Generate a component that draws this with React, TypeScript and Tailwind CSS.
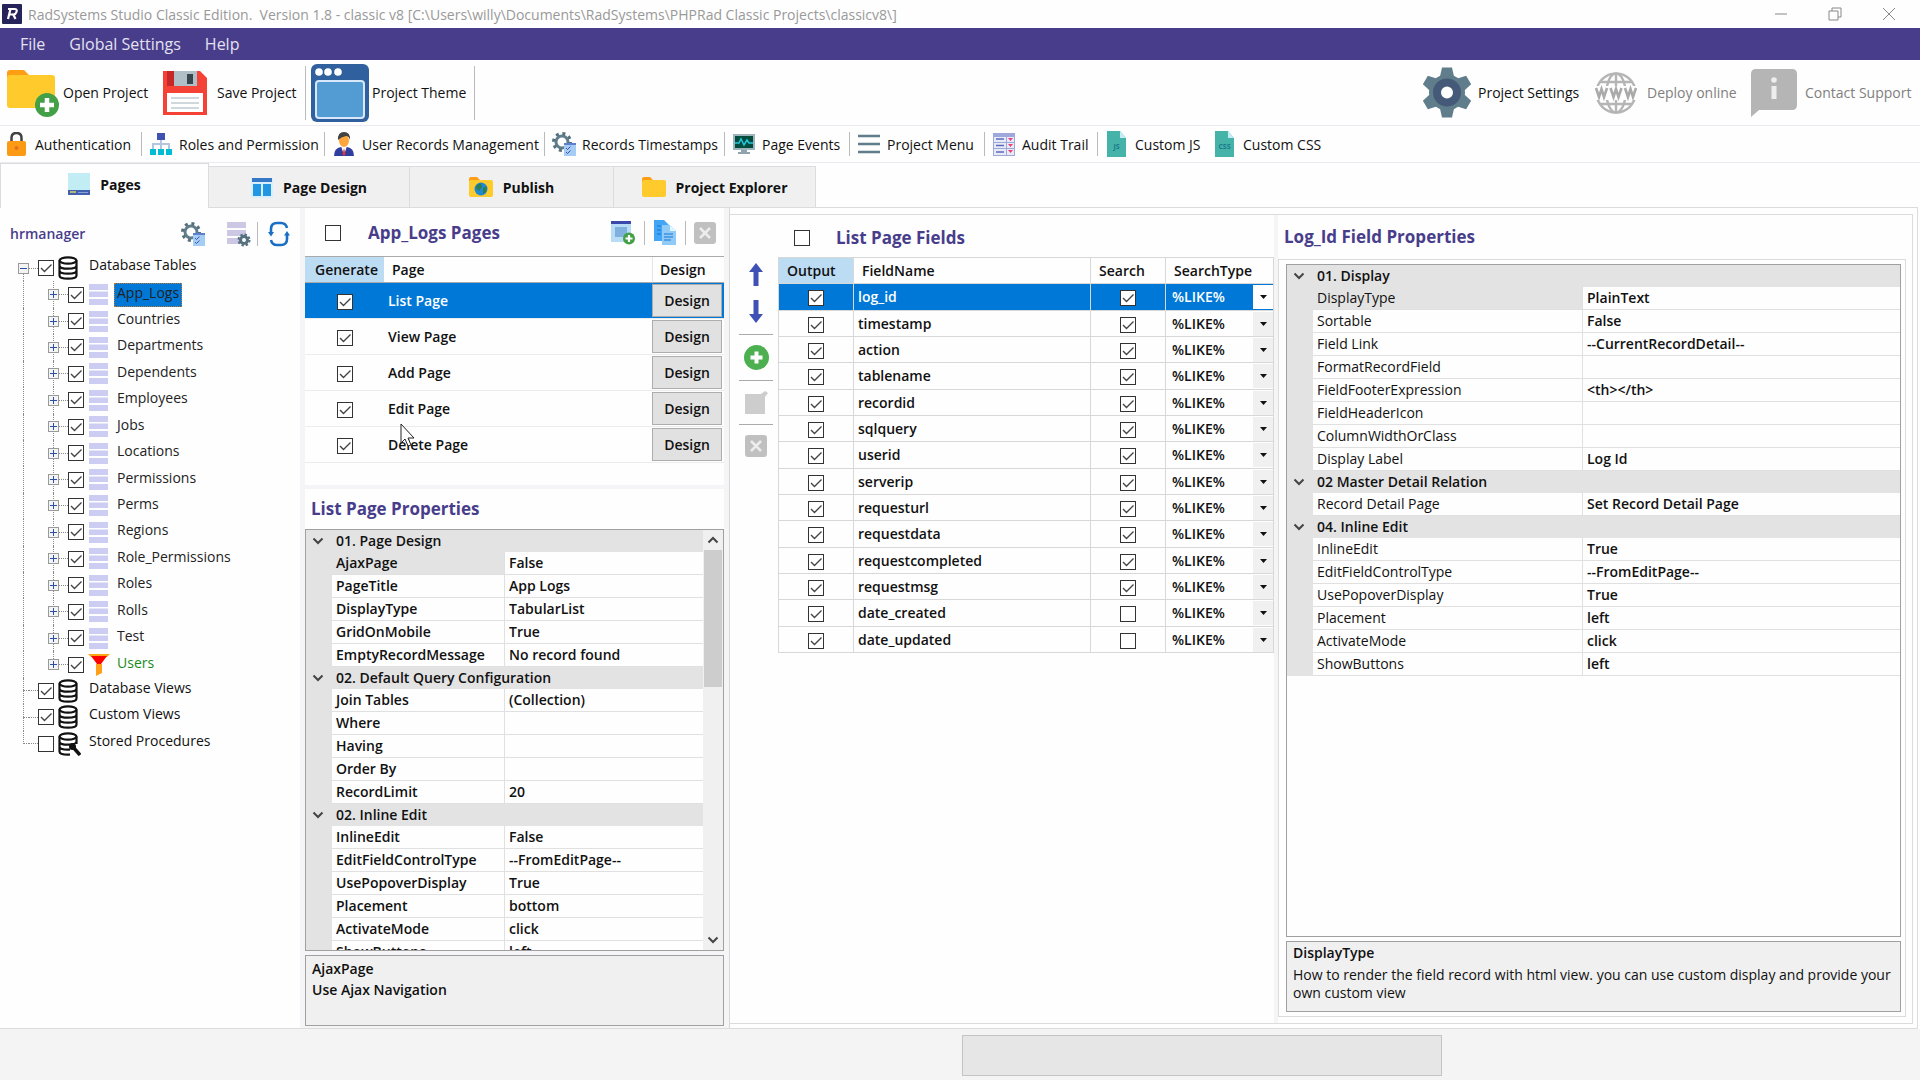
import { ReactNode, useState } from 'react'
import clsx from 'clsx'

type Group = { title: string; rows: [string, string][] }

const tables = [
  'App_Logs',
  'Countries',
  'Departments',
  'Dependents',
  'Employees',
  'Jobs',
  'Locations',
  'Permissions',
  'Perms',
  'Regions',
  'Role_Permissions',
  'Roles',
  'Rolls',
  'Test',
  'Users',
]

const pages = ['List Page', 'View Page', 'Add Page', 'Edit Page', 'Delete Page']

const fields = [
  'log_id',
  'timestamp',
  'action',
  'tablename',
  'recordid',
  'sqlquery',
  'userid',
  'serverip',
  'requesturl',
  'requestdata',
  'requestcompleted',
  'requestmsg',
  'date_created',
  'date_updated',
]

const pageProps: Group[] = [
  {
    title: '01. Page Design',
    rows: [
      ['AjaxPage', 'False'],
      ['PageTitle', 'App Logs'],
      ['DisplayType', 'TabularList'],
      ['GridOnMobile', 'True'],
      ['EmptyRecordMessage', 'No record found'],
    ],
  },
  {
    title: '02. Default Query Configuration',
    rows: [
      ['Join Tables', '(Collection)'],
      ['Where', ''],
      ['Having', ''],
      ['Order By', ''],
      ['RecordLimit', '20'],
    ],
  },
  {
    title: '02. Inline Edit',
    rows: [
      ['InlineEdit', 'False'],
      ['EditFieldControlType', '--FromEditPage--'],
      ['UsePopoverDisplay', 'True'],
      ['Placement', 'bottom'],
      ['ActivateMode', 'click'],
      ['ShowButtons', 'left'],
    ],
  },
]

const fieldProps: Group[] = [
  {
    title: '01. Display',
    rows: [
      ['DisplayType', 'PlainText'],
      ['Sortable', 'False'],
      ['Field Link', '--CurrentRecordDetail--'],
      ['FormatRecordField', ''],
      ['FieldFooterExpression', '<th></th>'],
      ['FieldHeaderIcon', ''],
      ['ColumnWidthOrClass', ''],
      ['Display Label', 'Log Id'],
    ],
  },
  {
    title: '02 Master Detail Relation',
    rows: [['Record Detail Page', 'Set Record Detail Page']],
  },
  {
    title: '04. Inline Edit',
    rows: [
      ['InlineEdit', 'True'],
      ['EditFieldControlType', '--FromEditPage--'],
      ['UsePopoverDisplay', 'True'],
      ['Placement', 'left'],
      ['ActivateMode', 'click'],
      ['ShowButtons', 'left'],
    ],
  },
]

const Check = ({ label, on = true }: { label: string; on?: boolean }) => {
  return (
    <span className="relative inline-block size-4 shrink-0 align-middle">
      <input
        type="checkbox"
        aria-label={label}
        defaultChecked={on}
        className="peer block size-4 appearance-none border border-[#333] bg-white"
      />
      <svg
        className="pointer-events-none absolute inset-0 hidden size-4 peer-checked:block"
        viewBox="0 0 16 16"
        fill="none"
        stroke="#444"
        strokeWidth="1.4"
      >
        <path d="M3 8l3.5 3.5L13.5 4.5" />
      </svg>
    </span>
  )
}

const Chevron = ({ up }: { up?: boolean }) => {
  return (
    <svg
      className="h-3 w-3"
      viewBox="0 0 12 12"
      fill="none"
      stroke="#444"
      strokeWidth="2"
      aria-hidden="true"
    >
      <path d={up ? 'M1.5 8.5L6 4l4.5 4.5' : 'M1.5 3.5L6 8l4.5-4.5'} />
    </svg>
  )
}

/* Icons */

const Logo = () => (
  <svg className="h-5 w-5" viewBox="0 0 20 20" aria-hidden="true">
    <rect width="20" height="20" rx="1" fill="#26225a" />
    <path
      d="M6 5h6.5q3 0 2 3-.6 2.2-3.2 2.6L13.5 15M8.5 5L6 15M7.5 10.5H11"
      fill="none"
      stroke="#fff"
      strokeWidth="2.2"
    />
  </svg>
)

const FolderPlus = () => (
  <svg className="h-12 w-14" viewBox="0 0 56 48" aria-hidden="true">
    <path d="M1 4q0-3 3-3h14l5 5H40v10H1z" fill="#ff9d14" />
    <rect x="1" y="6" width="48" height="33" rx="3" fill="#ffca2c" />
    <circle cx="41" cy="36" r="12" fill="#43a047" />
    <path d="M41 29v14M34 36h14" stroke="#fff" strokeWidth="4.5" />
  </svg>
)

const Floppy = () => (
  <svg className="h-11 w-11" viewBox="0 0 44 44" aria-hidden="true">
    <path d="M0 0h37l7 7v37H0z" fill="#f44336" />
    <path d="M4 0h8v15H4z" fill="#c62828" />
    <path d="M11 0h23v15H11z" fill="#b0bec5" />
    <path d="M24 3h6v10h-6z" fill="#37474f" />
    <path d="M4 22h36v19H4z" fill="#fff" />
    <path d="M8 27h28M8 32h28M8 37h28" stroke="#cfd8dc" strokeWidth="2" />
  </svg>
)

const ThemeIcon = () => (
  <svg className="h-[58px] w-[58px]" viewBox="0 0 58 58" aria-hidden="true">
    <rect width="58" height="58" rx="6" fill="#30609d" />
    <rect x="5" y="17" width="48" height="37" rx="3" fill="#539bd3" stroke="#d6e8fa" strokeWidth="2" />
    <g fill="#fff">
      <circle cx="8" cy="8" r="3.8" />
      <circle cx="17" cy="8" r="3.8" />
      <circle cx="27" cy="8" r="3.8" />
    </g>
  </svg>
)

const BigGear = () => (
  <svg className="h-[51px] w-[50px]" viewBox="0 0 50 50" aria-hidden="true">
    <g fill="#607d8b">
      <circle cx="25" cy="25" r="18" />
      {[0, 60, 120, 180, 240, 300].map(a => (
        <path key={a} d="M18 9L20 0h10l2 9z" transform={`rotate(${a} 25 25)`} />
      ))}
    </g>
    <circle cx="25" cy="25" r="10" fill="#fff" stroke="#455a78" strokeWidth="8" />
  </svg>
)

const Globe = () => (
  <svg className="h-[42px] w-[42px]" viewBox="0 0 42 42" aria-hidden="true">
    <g fill="none" stroke="#b5b5b5" strokeWidth="2.4">
      <circle cx="21" cy="21" r="19.5" />
      <ellipse cx="21" cy="21" rx="9.5" ry="19.5" />
      <path d="M21 1v40M5 10h32M5 32h32" />
    </g>
    <path d="M0 14h42v14H0z" fill="#fefefe" />
    <path
      d="M1 16l3 9 2.5-8L9 25l3-9M15.500 16l3 9 2.500-8 2.500 8 3-9M30 16l3 9 2.500-8 2.500 8 3-9"
      fill="none"
      stroke="#aaa"
      strokeWidth="2.6"
    />
  </svg>
)

const Support = () => (
  <svg className="h-12 w-[46px]" viewBox="0 0 46 48" aria-hidden="true">
    <path d="M5 0h36q5 0 5 5v31q0 5-5 5H8l-8 7V5q0-5 5-5z" fill="#b5b5b5" />
    <circle cx="23" cy="11" r="2.8" fill="#eee" />
    <path d="M20.5 17h5v13h-5z" fill="#eee" />
  </svg>
)

const Lock = () => (
  <svg className="h-6 w-6" viewBox="0 0 24 24" aria-hidden="true">
    <path d="M6.5 11V6q0-5 5-5t5 5v5" fill="none" stroke="#424242" strokeWidth="2.5" />
    <rect x="2" y="9" width="19" height="15" rx="2" fill="#fb9a15" />
    <circle cx="11.5" cy="16" r="2" fill="#e5711c" />
  </svg>
)

const OrgChart = () => (
  <svg className="h-6 w-6" viewBox="0 0 24 24" aria-hidden="true">
    <path d="M12 7v10M4 17v-5h16v5" fill="none" stroke="#b5c5de" strokeWidth="2" />
    <path d="M8 1h8v7H8z" fill="#3f51b5" />
    <path d="M1 17h6v6H1zM9 17h6v6H9zM17 17h6v6h-6z" fill="#00bcd4" />
  </svg>
)

const Person = () => (
  <svg className="h-6 w-6" viewBox="0 0 24 24" aria-hidden="true">
    <path d="M2 24q0-8 7-9h6q7 1 7 9z" fill="#303f9f" />
    <path d="M9 14h6l-3 9z" fill="#fff" />
    <path d="M12 16l1.5 6L12 24l-1.5-2z" fill="#e53935" />
    <ellipse cx="12" cy="8.5" rx="5" ry="6.5" fill="#ffa63a" />
    <path d="M6 8q-.5-8 6-8t6 8q-1-4-4-4-5 1-8 4z" fill="#424242" />
  </svg>
)

const GearDoc = () => (
  <svg className="h-6 w-6" viewBox="0 0 24 24" aria-hidden="true">
    <circle cx="10" cy="10" r="6" fill="none" stroke="#607d8b" strokeWidth="3" />
    <circle cx="10" cy="10" r="8.5" fill="none" stroke="#546e7a" strokeWidth="3" strokeDasharray="3 3.7" />
    <path d="M12 12h12v12H12z" fill="#a5cdf3" />
    <path d="M12 11h12v2H12z" fill="#5c7fd0" />
    <path d="M14 16l1.5 1.5 3-3M14 20l1.5 1.5 3-3" fill="none" stroke="#3f51b5" />
  </svg>
)

const Monitor = () => (
  <svg className="h-6 w-6" viewBox="0 0 24 24" aria-hidden="true">
    <path d="M1 2h22v16H1z" fill="#9fb3bd" />
    <path d="M3 4h18v12H3z" fill="#004d40" />
    <path d="M3 11h4l2-4 3 6 3-5 2 3h4" fill="none" stroke="#26c6da" strokeWidth="1.5" />
    <path d="M9 18h6v2h3v2H6v-2h3z" fill="#90a4ae" />
  </svg>
)

const Lines = () => (
  <svg className="h-6 w-6" viewBox="0 0 24 24" aria-hidden="true">
    <path d="M1 4h22M1 12h22M1 20h22" stroke="#607d8b" strokeWidth="2.4" />
  </svg>
)

const Audit = () => (
  <svg className="h-6 w-6" viewBox="0 0 24 24" aria-hidden="true">
    <path d="M1 1h22v23H1z" fill="#9fa8da" />
    <path d="M2 5h12v5H2zM2 11h12v5H2zM2 17h12v6H2zM15 5h7v5h-7zM15 11h7v5h-7zM15 17h7v6h-7z" fill="#e8eaf6" />
    <path d="M4 7h8M4 13.5h8M4 20h8" stroke="#5c6bc0" strokeWidth="1.5" />
    <path d="M16 6l2.5 3L21 6zM16 12l2.5 3 2.5-3zM16 18l2.5 3 2.5-3z" fill="#ec407a" />
  </svg>
)

const FileIcon = ({ text }: { text: string }) => (
  <svg className="h-[26px] w-6" viewBox="0 0 24 26" aria-hidden="true">
    <path d="M2 0h13l6 7v19H2z" fill="#45b3a8" />
    <path d="M15 0l6 7h-6z" fill="#c5ecf5" />
    <text x="11.5" y="18" textAnchor="middle" fontSize="7" fontWeight="700" fill="#1b7a8c" fontFamily="Open Sans">
      {text}
    </text>
  </svg>
)

const PagesIcon = () => (
  <svg className="h-[22px] w-[22px]" viewBox="0 0 22 22" aria-hidden="true">
    <path d="M0 0h22v17H0z" fill="#c3edf5" />
    <path d="M0 17h22v5H0z" fill="#4260ad" />
    <path d="M2 19h6" stroke="#dcd267" strokeWidth="1.5" />
    <path d="M10 19.5h10" stroke="#88a2d8" />
  </svg>
)

const LayoutIcon = () => (
  <svg className="h-[22px] w-[22px]" viewBox="0 0 22 22" aria-hidden="true">
    <path d="M0 2h22v20H0z" fill="#d6effa" />
    <path d="M1 2h20v4H1z" fill="#3578c6" />
    <path d="M2 8h8v12H2zM12 8h8v12h-8z" fill="#2196e3" />
  </svg>
)

const Folder = ({ globe }: { globe?: boolean }) => (
  <svg className="h-[22px] w-6" viewBox="0 0 24 22" aria-hidden="true">
    <path d="M0 3q0-2 2-2h6l3 3h9v4H0z" fill="#ff9d14" />
    <rect y="4" width="24" height="17" rx="2" fill="#ffca2c" />
    {globe && (
      <>
        <circle cx="12" cy="13" r="6.5" fill="#1e88d8" />
        <path d="M8 9l4-2 1 4-3 4-3-3zM14 12l4-2-1 6-3 2z" fill="#2e7d4f" />
      </>
    )}
  </svg>
)

const TableGear = () => (
  <svg className="h-[26px] w-6" viewBox="0 0 24 26" aria-hidden="true">
    <path d="M0 1h19v6H0zM0 9h19v6H0zM0 17h14v6H0z" fill="#ccc8e4" />
    <circle cx="17" cy="19" r="3.5" fill="none" stroke="#55707e" strokeWidth="3" />
    <circle cx="17" cy="19" r="5.5" fill="none" stroke="#55707e" strokeWidth="2" strokeDasharray="2.4 1.9" />
  </svg>
)

const Refresh = () => (
  <svg className="h-[26px] w-[22px]" viewBox="0 0 22 26" fill="none" stroke="#1a6fc4" strokeWidth="2.6" aria-hidden="true">
    <path d="M3 12V8q0-6 6-6h4q5 0 6 5M19 14v4q0 6-6 6H9q-5 0-6-5" />
    <path d="M0 11h6l-3 4.5zM16 14.5h6l-3-4.5z" fill="#1a6fc4" stroke="none" />
  </svg>
)

const Database = ({ wrench }: { wrench?: boolean }) => (
  <svg className="h-6 w-6" viewBox="0 0 24 24" fill="none" stroke="#111" strokeWidth="2.2" aria-hidden="true">
    <ellipse cx="11" cy="4.5" rx="8.5" ry="3.2" />
    <path d="M2.5 4.5v15M19.5 4.5v15M2.5 9.5q0 3.2 8.5 3.2t8.5-3.2M2.5 14.5q0 3.2 8.5 3.2t8.500-3.2M2.5 19.5q0 3.2 8.5 3.2t8.5-3.2" />
    {wrench && (
      <>
        <path d="M13 12h11v12H13z" fill="#fefefe" stroke="none" />
        <circle cx="15.5" cy="14.5" r="2.4" fill="#111" />
        <path d="M16 15l7 8" strokeWidth="3.5" />
      </>
    )}
  </svg>
)

const TableRows = () => (
  <svg className="h-[21px] w-[19px]" viewBox="0 0 19 21" aria-hidden="true">
    <path d="M0 0h19v6H0zM0 7.5h19v5.5H0zM0 15h19v6H0z" fill="#cdcdf4" />
  </svg>
)

const Funnel = () => (
  <svg className="h-[22px] w-[22px]" viewBox="0 0 22 22" aria-hidden="true">
    <path d="M0 0h22l-3 3H3z" fill="#f9a616" />
    <path d="M3 2h16l-6 8H9z" fill="#f00" />
    <path d="M8 10h6v9l-6 3z" fill="#ff9f1a" />
  </svg>
)

const AddWindow = () => (
  <svg className="h-[26px] w-[26px]" viewBox="0 0 26 26" aria-hidden="true">
    <path d="M1 1h20v21H1z" fill="#b9dcf5" />
    <path d="M1 1h20v3H1z" fill="#3949ab" />
    <path d="M5 7h12v10H5z" fill="#7fb0de" />
    <circle cx="19" cy="18.5" r="6" fill="#43a047" />
    <path d="M19 15v7M15.5 18.5h7" stroke="#fff" strokeWidth="2.2" />
  </svg>
)

const CopyPages = () => (
  <svg className="h-[26px] w-[24px]" viewBox="0 0 24 26" aria-hidden="true">
    <path d="M1 0h10l5 5v16H1z" fill="#42a5f5" />
    <path d="M9 5h8l6 6v14H9z" fill="#90caf9" />
    <path d="M4 6h4M4 10h4M4 14h4M11 14h9M11 17h9M11 20h7" stroke="#1976d2" strokeWidth="1.2" />
    <path d="M17 5l6 6h-6z" fill="#e1f5fe" />
  </svg>
)

const CloseBox = () => (
  <svg className="h-[22px] w-[22px]" viewBox="0 0 22 22" aria-hidden="true">
    <rect width="22" height="22" rx="3" fill="#c0c0c0" />
    <path d="M6 6l10 10M16 6L6 16" stroke="#ededed" strokeWidth="2.5" />
  </svg>
)

const Arrow = ({ down }: { down?: boolean }) => (
  <svg className={clsx('h-[23px] w-[14px]', down && 'rotate-180')} viewBox="0 0 14 23" aria-hidden="true">
    <path d="M7 0l7 9H9.500v14h-5V9H0z" fill="#3f51b5" />
  </svg>
)

const PlusCircle = () => (
  <svg className="h-[25px] w-[25px]" viewBox="0 0 25 25" aria-hidden="true">
    <circle cx="12.5" cy="12.5" r="12.5" fill="#4caf50" />
    <path d="M12.5 6.5v12M6.5 12.5h12" stroke="#fff" strokeWidth="4" />
  </svg>
)

const EditBox = () => (
  <svg className="h-[23px] w-[23px]" viewBox="0 0 23 23" aria-hidden="true">
    <path d="M0 3h16l4-3 3 2-3 4v17H0z" fill="#cdcdcd" />
  </svg>
)

/* Chrome */

const Sep = () => <div className="h-6 w-px shrink-0 bg-[#bbb]" />

const ToolItem = ({ icon, label, width }: { icon: ReactNode; label: string; width: string }) => {
  return (
    <button type="button" className={clsx('flex shrink-0 items-center gap-1.5 whitespace-nowrap', width)}>
      {icon}
      {label}
    </button>
  )
}

const Tab = ({ icon, label, active, width }: { icon: ReactNode; label: string; active?: boolean; width: string }) => {
  return (
    <button
      type="button"
      role="tab"
      aria-selected={!!active}
      className={clsx(
        'flex items-center justify-center gap-2.5 border-t border-r border-[#dcdcdc] text-[14px] font-bold whitespace-nowrap',
        width,
        active ? 'h-[45px] border-l bg-[#fefefe] pb-1' : 'h-[42px] border-b bg-[#f0f0f0]',
      )}
    >
      {icon}
      {label}
    </button>
  )
}

const Expander = ({ open }: { open?: boolean }) => {
  return (
    <button
      type="button"
      aria-label={open ? 'Collapse' : 'Expand'}
      className="relative grid size-[11px] place-items-center border border-[#999] bg-[#f4f4f4]"
    >
      <svg className="size-[7px]" viewBox="0 0 7 7" stroke="#2a4fa8" aria-hidden="true">
        <path d={open ? 'M0 3.5h7' : 'M0 3.5h7M3.5 0v7'} />
      </svg>
    </button>
  )
}

const RootNode = ({ label, on = true, open, last }: { label: string; on?: boolean; open?: boolean; last?: boolean }) => {
  return (
    <div className="flex items-center pl-[18px]">
      <div className="relative flex h-full w-[11px] items-center">
        <div
          className={clsx(
            'absolute left-[5px] w-px border-l border-dotted border-[#888]',
            open ? 'top-1/2 bottom-0' : last ? 'top-0 bottom-1/2' : 'inset-y-0',
          )}
        />
        {open ? <Expander open /> : <div className="ml-[5px] h-px w-1.5 border-t border-dotted border-[#888]" />}
      </div>
      <div className="w-[9px] border-t border-dotted border-[#888]" />
      <Check label={label} on={on} />
      <div className="ml-[3px]">
        <Database wrench={last} />
      </div>
      <span className="ml-2 pb-1.5">{label}</span>
    </div>
  )
}

const TableNode = ({ label, selected }: { label: string; selected?: boolean }) => {
  const users = label === 'Users'
  return (
    <div className="flex items-center pl-[23px]">
      <div className="w-[25px] self-stretch border-l border-dotted border-[#888]" />
      <div className="relative flex h-full w-[11px] items-center">
        <div
          className={clsx('absolute top-0 left-[5px] w-px border-l border-dotted border-[#888]', users ? 'bottom-1/2' : 'bottom-0')}
        />
        <Expander />
      </div>
      <div className="w-[9px] border-t border-dotted border-[#888]" />
      <Check label={label} />
      <div className="ml-[3px] flex w-[23px] justify-center">{users ? <Funnel /> : <TableRows />}</div>
      <span
        className={clsx(
          'ml-1 border border-dotted px-0.5 pb-1',
          selected ? 'border-[#c47a2c] bg-[#0078d7]' : 'border-transparent',
          users ? 'text-[#1a8a1a]' : 'text-[#222]',
        )}
      >
        {label}
      </span>
    </div>
  )
}

const PropertyTable = ({ name, groups, bold, wide }: { name: string; groups: Group[]; bold?: boolean; wide?: boolean }) => {
  return (
    <table
      aria-label={name}
      className={clsx('w-full table-fixed border-separate border-spacing-0 text-[14px] leading-5', wide ? 'h-[411px]' : 'h-[434px]')}
    >
      <colgroup>
        <col className="w-[26px]" />
        <col className={wide ? 'w-[270px]' : 'w-[173px]'} />
        <col />
      </colgroup>
      {groups.map((group, g) => (
        <tbody key={group.title}>
          <tr className="bg-[#e3e3e3]">
            <td className="p-0 pl-1.5">
              <Chevron />
            </td>
            <th colSpan={2} className="p-0 pl-1 text-left font-semibold">
              {group.title}
            </th>
          </tr>
          {group.rows.map(([key, value], i) => (
            <tr key={key}>
              <td className="bg-[#e3e3e3] p-0" />
              <th
                className={clsx(
                  'border-r border-b border-[#e0e0e0] p-0 pl-1 text-left',
                  bold ? 'font-semibold' : 'font-normal',
                  g === 0 && i === 0 && 'bg-[#e3e3e3]',
                )}
              >
                {key}
              </th>
              <td className="border-b border-[#e0e0e0] p-0">
                <input
                  type="text"
                  aria-label={key}
                  defaultValue={value}
                  className="block h-5 w-full bg-transparent pl-1 font-semibold outline-none"
                />
              </td>
            </tr>
          ))}
        </tbody>
      ))}
    </table>
  )
}

const Heading = ({ children }: { children: ReactNode }) => (
  <h2 className="text-[17px] leading-6 font-bold whitespace-nowrap text-[#483d8b]">{children}</h2>
)

export default function App() {
  const [page, setPage] = useState('List Page')
  const [field, setField] = useState('log_id')

  return (
    <div className="flex h-screen flex-col overflow-hidden bg-[#fefefe] font-['Open_Sans',sans-serif] text-[14px] text-[#111]">
      <header className="flex h-7 shrink-0 items-center bg-[#fefefe] pr-1 pl-0.5 text-[#999]">
        <Logo />
        <h1 className="ml-1.5 grow text-[14px] whitespace-pre">
          {'RadSystems Studio Classic Edition.  Version 1.8 - classic v8 [C:\\Users\\willy\\Documents\\RadSystems\\PHPRad Classic Projects\\classicv8\\]'}
        </h1>
        <div className="flex items-center">
          {['M1 7h12', 'M1 4h9v9H1zM4 4V1h9v9h-3', 'M1 1l12 12M13 1L1 13'].map((d, i) => (
            <button
              key={d}
              type="button"
              aria-label={['Minimize', 'Restore', 'Close'][i]}
              className="grid h-6 w-[54px] place-items-center"
            >
              <svg className="size-3.5" viewBox="0 0 14 14" fill="none" stroke="#888" aria-hidden="true">
                <path d={d} />
              </svg>
            </button>
          ))}
        </div>
      </header>

      <nav className="flex h-8 shrink-0 items-center gap-6 bg-[#483d8b] pl-5 text-[16px] text-[#e4e2f0]">
        <button type="button">File</button>
        <button type="button">Global Settings</button>
        <button type="button">Help</button>
      </nav>

      <div className="flex h-[66px] shrink-0 items-center border-b border-[#eaeaf0] pl-1.5 whitespace-nowrap">
        <button type="button" className="flex w-[157px] items-center gap-px">
          <FolderPlus />
          Open Project
        </button>
        <button type="button" className="flex w-[142px] items-center gap-2.5">
          <Floppy />
          Save Project
        </button>
        <div className="h-[54px] w-px bg-[#bbb]" />
        <button type="button" className="flex w-[168px] items-center gap-[3px] pl-[5px]">
          <ThemeIcon />
          Project Theme
        </button>
        <div className="h-[54px] w-px bg-[#bbb]" />
        <button type="button" className="ml-auto flex w-[173px] items-center gap-1.5">
          <BigGear />
          Project Settings
        </button>
        <button type="button" className="flex w-[156px] items-center gap-2.5 text-[#808080]">
          <Globe />
          Deploy online
        </button>
        <button type="button" className="flex w-[169px] items-center gap-2 text-[#808080]">
          <Support />
          Contact Support
        </button>
      </div>

      <div className="flex h-[37px] shrink-0 items-center border-b border-[#eaeaf0]">
        <ToolItem icon={<Lock />} label="Authentication" width="w-[141px] pl-[5px]" />
        <Sep />
        <ToolItem icon={<OrgChart />} label="Roles and Permission" width="w-[182px] pl-[7px]" />
        <Sep />
        <ToolItem icon={<Person />} label="User Records Management" width="w-[219px] pl-[7px]" />
        <Sep />
        <ToolItem icon={<GearDoc />} label="Records Timestamps" width="w-[179px] pl-[7px]" />
        <Sep />
        <ToolItem icon={<Monitor />} label="Page Events" width="w-[124px] pl-[7px]" />
        <Sep />
        <ToolItem icon={<Lines />} label="Project Menu" width="w-[134px] pl-[7px]" />
        <Sep />
        <ToolItem icon={<Audit />} label="Audit Trail" width="w-[112px] pl-[7px]" />
        <Sep />
        <ToolItem icon={<FileIcon text="JS" />} label="Custom JS" width="w-[108px] pl-[7px]" />
        <ToolItem icon={<FileIcon text="CSS" />} label="Custom CSS" width="w-[124px] pl-[7px]" />
      </div>

      <div role="tablist" className="flex h-[45px] shrink-0 items-end">
        <Tab icon={<PagesIcon />} label="Pages" width="w-[209px]" active />
        <Tab icon={<LayoutIcon />} label="Page Design" width="w-[201px]" />
        <Tab icon={<Folder globe />} label="Publish" width="w-[204px]" />
        <Tab icon={<Folder />} label="Project Explorer" width="w-[202px]" />
        <div className="mr-0.5 h-px grow bg-[#dcdcdc]" />
      </div>

      <main className="mr-0.5 flex min-h-0 grow border-r border-b border-[#dcdcdc]">
        <aside className="w-[300px] shrink-0">
          <div className="flex h-[47px] items-center pt-1 pl-2.5">
            <h2 className="w-[171px] text-[14px] font-semibold text-[#483d8b]">hrmanager</h2>
            <button type="button" aria-label="Table settings" className="w-[46px]">
              <GearDoc />
            </button>
            <button type="button" aria-label="Table options" className="w-[30px]">
              <TableGear />
            </button>
            <Sep />
            <button type="button" aria-label="Refresh" className="ml-2.5">
              <Refresh />
            </button>
          </div>
          <div className="grid h-[502px] auto-rows-fr text-[14px] leading-[18px] whitespace-nowrap">
            <RootNode label="Database Tables" open />
            {tables.map(t => (
              <TableNode key={t} label={t} selected={t === 'App_Logs'} />
            ))}
            <RootNode label="Database Views" />
            <RootNode label="Custom Views" />
            <RootNode label="Stored Procedures" on={false} last />
          </div>
        </aside>

        <section className="relative flex w-[430px] shrink-0 flex-col border-r border-[#d8d8d8] bg-[#f5f5f7] px-[5px] pb-0.5">
          <div className="flex h-[48px] shrink-0 items-center bg-[#fefefe] pt-0.5 pl-5">
            <Check label="Select all pages" on={false} />
            <div className="ml-[27px] grow">
              <Heading>App_Logs Pages</Heading>
            </div>
            <div className="flex items-center gap-2 pr-2">
              <button type="button" aria-label="Add page">
                <AddWindow />
              </button>
              <Sep />
              <button type="button" aria-label="Copy page">
                <CopyPages />
              </button>
              <Sep />
              <button type="button" aria-label="Delete page">
                <CloseBox />
              </button>
            </div>
          </div>
          <div className="h-[229px] shrink-0 border-t border-[#aaa] bg-[#fefefe]">
            <table className="w-full table-fixed border-separate border-spacing-0 text-[14px] leading-5 font-semibold">
              <thead>
                <tr className="h-[26px] text-left">
                  <th className="w-[79px] border-b border-[#aaa] bg-[#bcdcf4] p-0 pl-2.5 font-semibold">Generate</th>
                  <th className="border-b border-[#aaa] p-0 pl-2 font-semibold">Page</th>
                  <th className="w-[72px] border-b border-l border-[#aaa] border-l-[#e5e5e5] p-0 pl-[7px] font-semibold">Design</th>
                </tr>
              </thead>
              <tbody>
                {pages.map(p => (
                  <tr
                    key={p}
                    onClick={() => setPage(p)}
                    className={clsx('h-9', p === page && 'bg-[#0078d7] text-white')}
                  >
                    <td className="border-b border-[#ececec] p-0 text-center">
                      <Check label={`Generate ${p}`} />
                    </td>
                    <td className="border-b border-[#ececec] p-0 pl-1">{p}</td>
                    <td className="border-b border-[#ececec] p-0">
                      <button
                        type="button"
                        className="block h-[33px] w-[70px] border border-[#adadad] bg-[#e1e1e1] text-[#111]"
                      >
                        Design
                      </button>
                    </td>
                  </tr>
                ))}
              </tbody>
            </table>
          </div>
          <div className="mt-1 flex h-10 shrink-0 items-center bg-[#fefefe] pl-1.5">
            <Heading>List Page Properties</Heading>
          </div>
          <div className="flex min-h-0 grow border border-[#a0a0a0] bg-[#fefefe]">
            <div className="min-w-0 grow overflow-hidden">
              <PropertyTable name="List Page Properties" groups={pageProps} bold />
            </div>
            <div className="flex w-5 shrink-0 flex-col items-center bg-[#f0f0f0]">
              <div className="grid h-5 place-items-center">
                <Chevron up />
              </div>
              <div className="h-[137px] w-[18px] bg-[#cdcdcd]" />
              <div className="mt-auto grid h-5 place-items-center">
                <Chevron />
              </div>
            </div>
          </div>
          <div className="mt-1 h-[71px] shrink-0 border border-[#a0a0a0] bg-[#f0f0f0] px-1.5 py-0.5 text-[14px] leading-[21px] font-semibold">
            <p>AjaxPage</p>
            <p>Use Ajax Navigation</p>
          </div>
          <svg className="pointer-events-none absolute top-[215px] left-[100px] h-6 w-4" viewBox="0 0 16 24" aria-hidden="true">
            <path d="M1 1v19l4-4 3 7 3-1-3-7h6z" fill="#fff" stroke="#222" />
          </svg>
        </section>

        <div className="mt-1.5 mr-1 mb-1 flex min-w-0 grow border-t border-r border-b border-[#dcdcdc]">
          <div className="flex w-12 shrink-0 flex-col items-center gap-2.5 pt-[45px] pl-1">
            <button type="button" aria-label="Move up" className="h-7">
              <Arrow />
            </button>
            <button type="button" aria-label="Move down" className="h-[26px]">
              <Arrow down />
            </button>
            <div className="h-px w-[34px] bg-[#aaa]" />
            <button type="button" aria-label="Add field">
              <PlusCircle />
            </button>
            <div className="h-px w-[34px] bg-[#aaa]" />
            <button type="button" aria-label="Edit field">
              <EditBox />
            </button>
            <div className="h-px w-[34px] bg-[#aaa]" />
            <button type="button" aria-label="Delete field">
              <CloseBox />
            </button>
          </div>

          <section className="w-[496px] shrink-0">
            <div className="flex h-[42px] items-center gap-[26px] pt-1 pl-4">
              <Check label="Select all fields" on={false} />
              <Heading>List Page Fields</Heading>
            </div>
            <table className="w-full table-fixed border-separate border-spacing-0 border-t border-l border-[#d8d8d8] text-[14px] leading-5 font-semibold">
              <thead>
                <tr className="h-[26px] text-left">
                  <th className="w-[75px] border-r border-b border-[#d8d8d8] bg-[#bcdcf4] p-0 pl-2 font-semibold">Output</th>
                  <th className="border-r border-b border-[#d8d8d8] p-0 pl-2 font-semibold">FieldName</th>
                  <th className="w-[75px] border-r border-b border-[#d8d8d8] p-0 pl-2 font-semibold">Search</th>
                  <th className="w-[108px] border-r border-b border-[#d8d8d8] p-0 pl-2 font-semibold">SearchType</th>
                </tr>
              </thead>
              <tbody>
                {fields.map((f, i) => (
                  <tr
                    key={f}
                    onClick={() => setField(f)}
                    className={clsx(i % 3 === 0 ? 'h-[27px]' : 'h-[26px]', f === field && 'bg-[#0078d7] text-white')}
                  >
                    <td className="border-r border-b border-[#d8d8d8] p-0 text-center">
                      <Check label={`Output ${f}`} />
                    </td>
                    <td className="border-r border-b border-[#d8d8d8] p-0 pl-1">{f}</td>
                    <td className="border-r border-b border-[#d8d8d8] p-0 text-center">
                      <Check label={`Search ${f}`} on={!f.startsWith('date_')} />
                    </td>
                    <td className="border-r border-b border-[#d8d8d8] p-0">
                      <div className="relative flex h-6 items-center">
                        <select
                          aria-label={`Search type ${f}`}
                          defaultValue="%LIKE%"
                          className="h-full w-full appearance-none bg-transparent pl-1.5 font-semibold outline-none"
                        >
                          <option>%LIKE%</option>
                        </select>
                        <span
                          className={clsx(
                            'pointer-events-none absolute inset-y-0 right-0 grid w-5 place-items-center',
                            f === field ? 'bg-white' : 'bg-[#f0f0f0]',
                          )}
                        >
                          <svg className="h-1 w-[7px]" viewBox="0 0 7 4" aria-hidden="true">
                            <path d="M0 0h7L3.5 4z" fill="#111" />
                          </svg>
                        </span>
                      </div>
                    </td>
                  </tr>
                ))}
              </tbody>
            </table>
          </section>

          <section className="flex min-w-0 grow flex-col border-l-4 border-[#f5f5f7] pr-1.5">
            <div className="flex h-11 shrink-0 items-center pl-1.5">
              <Heading>Log_Id Field Properties</Heading>
            </div>
            <div className="mb-1.5 flex min-h-0 grow flex-col gap-1 border border-[#dcdcdc] p-1 pl-[7px]">
              <div className="min-h-0 grow overflow-hidden border border-[#a0a0a0]">
                <PropertyTable name="Log_Id Field Properties" groups={fieldProps} wide />
              </div>
              <div className="h-[71px] shrink-0 border border-[#a0a0a0] bg-[#f0f0f0] px-1.5 py-0.5 text-[14px] leading-[18px]">
                <p className="pb-1 font-semibold">DisplayType</p>
                <p>
                  How to render the field record with html view. you can use custom display and provide your own custom view
                </p>
              </div>
            </div>
          </section>
        </div>
      </main>

      <footer className="h-[51px] shrink-0 bg-[#f4f4f5] pt-1.5">
        <div
          role="progressbar"
          aria-label="Build progress"
          aria-valuenow={0}
          className="ml-[962px] h-[41px] w-[480px] border border-[#c4c4c4] bg-[#e6e6e6]"
        />
      </footer>
    </div>
  )
}
